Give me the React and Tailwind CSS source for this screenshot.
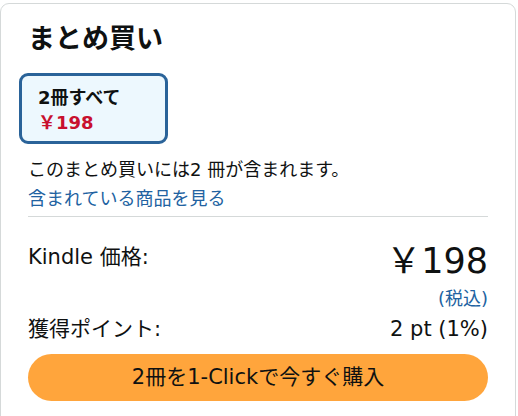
export default function App() {
  return (
    <div className="w-[518px] h-[416px] overflow-hidden bg-white pt-[3px]" style={{ fontFamily: '"DejaVu Sans", "Noto Sans CJK JP", sans-serif' }}>
      <div className="w-[516px] h-[420px] border border-[#d5d9d9] rounded-t-[9px] px-[27px] pt-[18px] text-[#0f1111]">
        <h1 className="text-[27px] leading-[34px] font-bold">まとめ買い</h1>
        <div className="mt-[17px] ml-[-9px] w-[149px] h-[71px] border-[3px] border-[#2a6399] rounded-[9px] bg-[#edf8fe] pl-[16px] pt-[9px]">
          <div className="text-[18px] leading-[25px] font-bold">2冊すべて</div>
          <div className="text-[18px] leading-[25px] font-bold text-[#c8102e]">￥198</div>
        </div>
        <p className="mt-[13px] text-[18px] leading-[26px]">このまとめ買いには2 冊が含まれます。</p>
        <a className="block mt-[4px] text-[18px] leading-[24px] text-[#2162a1]">含まれている商品を見る</a>
        <div className="mt-[5px] h-px bg-[#d5d9d9]" />
        <div className="mt-[24px] flex justify-between items-start">
          <span className="text-[21px] leading-[28px] mt-[2px]">Kindle 価格:</span>
          <span className="text-[35px] leading-[40px]">￥198</span>
        </div>
        <div className="mt-[6px] text-right text-[18px] leading-[24px] text-[#2162a1]">(税込)</div>
        <div className="mt-[3px] flex justify-between items-center text-[21px] leading-[30px]">
          <span>獲得ポイント:</span>
          <span>2 pt (1%)</span>
        </div>
        <button className="mt-[10px] w-full h-[47px] rounded-full bg-[#ffa53c] text-[21px] text-[#0f1111]">2冊を1-Clickで今すぐ購入</button>
      </div>
    </div>
  );
}
